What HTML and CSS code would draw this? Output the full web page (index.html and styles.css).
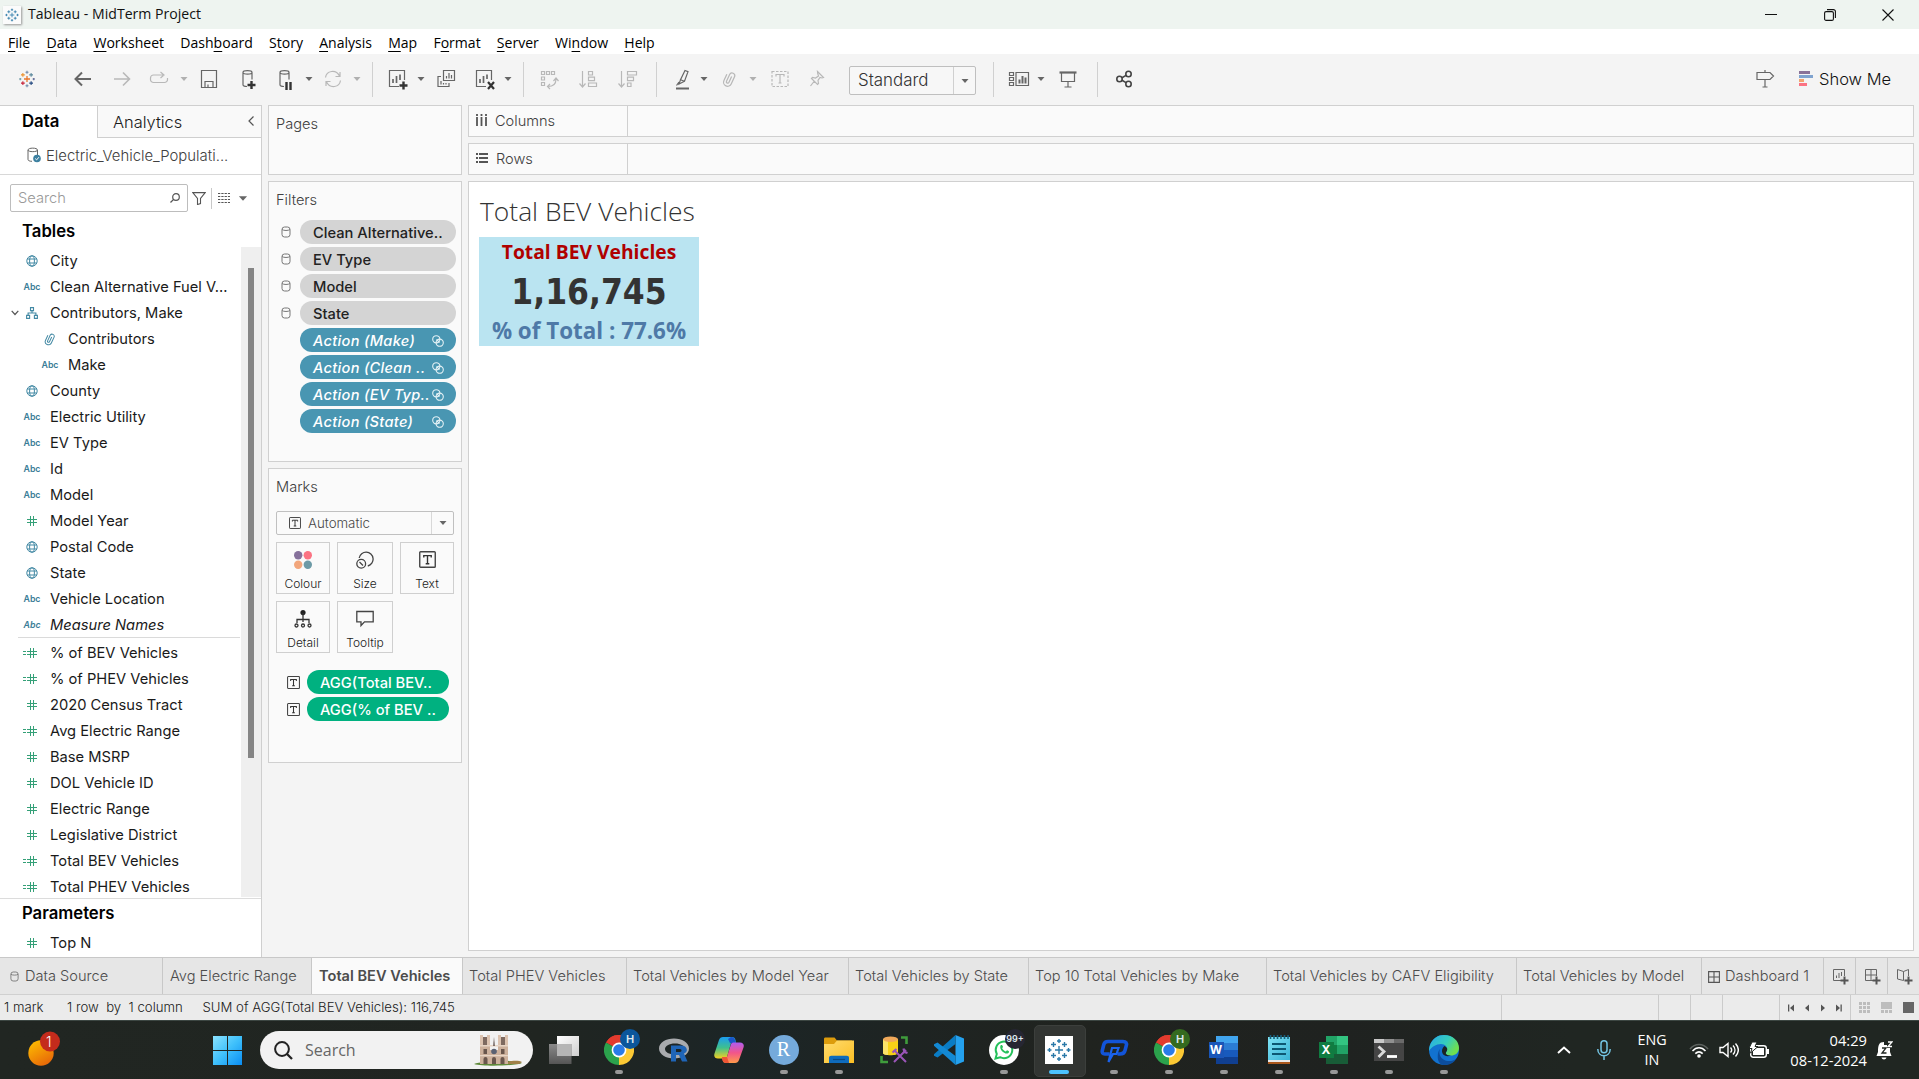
FILE: index.html
```html
<!DOCTYPE html>
<html lang="en">
<head>
<meta charset="utf-8">
<title>Tableau - MidTerm Project</title>
<link rel="stylesheet" href="styles.css">
</head>
<body>
<svg class="defs" width="0" height="0">
  <defs>
    <symbol id="globe" viewBox="0 0 12 12"><g fill="none" stroke="#4389a4" stroke-width="1"><circle cx="6" cy="6" r="5.2"/><ellipse cx="6" cy="6" rx="2.4" ry="5.2"/><path d="M1.2 4h9.6M1.2 8h9.6"/></g></symbol>
    <symbol id="hash" viewBox="0 0 10 10"><path d="M3.5 0v10M6.5 0v10M0 3.5h10M0 6.5h10" stroke="#35a078" stroke-width="1" fill="none"/></symbol>
    <symbol id="calc" viewBox="0 0 14 10"><path d="M7.5 0v10M10.5 0v10M4 3.5h10M4 6.5h10M0 3.5h3M0 6.5h3" stroke="#35a078" stroke-width="1" fill="none"/></symbol>
    <symbol id="tree" viewBox="0 0 12 12"><path d="M4.5 .6h3v3h-3zM.6 8.4h3v3h-3zM8.4 8.4h3v3h-3zM6 3.6V6M2.1 8.4V6h7.8v2.4" fill="none" stroke="#4389a4" stroke-width="1.1"/></symbol>
    <symbol id="clip" viewBox="0 0 12 14"><path transform="rotate(25 6 7)" d="M2.500 4.500v5.500a3.200 3.200 0 0 0 6.400 0V3.300a2.200 2.200 0 0 0-4.300 0v6.400a1 1 0 0 0 2.100 0V4.500" fill="none" stroke="currentColor" stroke-width="1"/></symbol>
    <symbol id="cyl" viewBox="0 0 10 12"><g fill="none" stroke="#777" stroke-width="1"><rect x="1" y="1" width="8" height="10" rx="2.5"/><path d="M1 3.500c1.500 1.300 6.500 1.300 8 0"/></g></symbol>
    <symbol id="rings" viewBox="0 0 12 12"><g fill="none" stroke="#e4f1f5" stroke-width="1.100"><circle cx="4.300" cy="4.300" r="3.600"/><circle cx="7.700" cy="7.700" r="3.600"/><path d="M4.500 4.500l3 3"/></g></symbol>
    <symbol id="tbox" viewBox="0 0 16 16"><rect x=".7" y=".7" width="14.600" height="14.600" rx=".8" fill="none" stroke="#444" stroke-width="1.300"/><path d="M4.500 6V4.300h7V6M8 4.300v7.700M6.300 12h3.400" fill="none" stroke="#333" stroke-width="1.300"/></symbol>
    <symbol id="caret" viewBox="0 0 10 6"><path d="M1.500 1h7L5 5z" fill="currentColor"/></symbol>
    <symbol id="plusgrid" viewBox="0 0 24 24"><g stroke-width="1.400"><path d="M12 1v4M10 3h4M12 19v4M10 21h4" stroke="#6d87a9"/><path d="M12 8v8M8 12h8" stroke="#e8762c" stroke-width="1.700"/><path d="M6.500 4v5M4 6.500h5" stroke="#eb912c"/><path d="M17.500 4v5M15 6.500h5" stroke="#59879b"/><path d="M6.500 15v5M4 17.500h5" stroke="#c72037"/><path d="M17.500 15v5M15 17.500h5" stroke="#1f457e"/><path d="M3 10.500v3M1.500 12h3" stroke="#7099a6"/><path d="M21 10.500v3M19.500 12h3" stroke="#5c6692"/></g></symbol>
    <symbol id="plusblue" viewBox="0 0 24 24"><path d="M12 1v4M10 3h4M12 19v4M10 21h4M12 8v8M8 12h8M6.500 4v5M4 6.500h5M17.500 4v5M15 6.500h5M6.500 15v5M4 17.500h5M17.500 15v5M15 17.500h5M2.500 10v4M.500 12h4M21.500 10v4M19.500 12h4" stroke="#2b79a8" stroke-width="1.400"/></symbol>
    <symbol id="chrome" viewBox="0 0 30 30"><path d="M15 15 2 7.500A15 15 0 0 1 28 7.500z" fill="#e33b2e"/><path d="M15 15 2 7.500A15 15 0 0 0 15 30l6.500-11z" fill="#2ba24c"/><path d="M15 15V7.500h13A15 15 0 0 1 15 30z" fill="#fcc934"/><path d="M2 7.500A15 15 0 0 1 28 7.500H15z" fill="#e33b2e"/><circle cx="15" cy="15" r="7.400" fill="#fff"/><circle cx="15" cy="15" r="5.800" fill="#2a7be8"/></symbol>
    <linearGradient id="win" x1="0" y1="0" x2="1" y2="1"><stop offset="0" stop-color="#8be3ff"/><stop offset=".5" stop-color="#3fc0fb"/><stop offset="1" stop-color="#0a8df2"/></linearGradient>
    <linearGradient id="sun" x1="0" y1="0" x2=".6" y2="1"><stop offset="0" stop-color="#ffc400"/><stop offset="1" stop-color="#e86a08"/></linearGradient>
    <linearGradient id="tv" x1="0" y1="0" x2="1" y2="1"><stop offset="0" stop-color="#fff"/><stop offset="1" stop-color="#cfcfcf"/></linearGradient>
    <linearGradient id="tvb" x1="0" y1="0" x2="0" y2="1"><stop offset="0" stop-color="#8a8a8a"/><stop offset="1" stop-color="#555"/></linearGradient>
    <linearGradient id="cpa" x1="0" y1="0" x2="0" y2="1"><stop offset="0" stop-color="#1b9df0"/><stop offset=".5" stop-color="#3fc08d"/><stop offset="1" stop-color="#f5d020"/></linearGradient>
    <linearGradient id="cpb" x1="0" y1="0" x2="0" y2="1"><stop offset="0" stop-color="#b05cf0"/><stop offset=".5" stop-color="#f2558a"/><stop offset="1" stop-color="#ff9a4a"/></linearGradient>
    <linearGradient id="fold" x1="0" y1="0" x2="1" y2="1"><stop offset="0" stop-color="#ffdb6e"/><stop offset="1" stop-color="#fbbf24"/></linearGradient>
    <linearGradient id="edg" x1="0" y1="0" x2="1" y2=".5"><stop offset="0" stop-color="#2aa9ea"/><stop offset=".6" stop-color="#35cdbd"/><stop offset="1" stop-color="#6fe04f"/></linearGradient>
    <linearGradient id="npad" x1="0" y1="0" x2="1" y2="1"><stop offset="0" stop-color="#7fe3f5"/><stop offset="1" stop-color="#3bb4d6"/></linearGradient>
  </defs>
</svg>

<header class="titlebar">
  <span class="appicon"><svg width="14" height="14"><use href="#plusblue"/></svg></span>
  <span class="apptitle">Tableau - MidTerm Project</span>
  <div class="winbtns">
    <svg width="12" height="12" viewBox="0 0 12 12"><path d="M0 5.500h12" stroke="#111"/></svg>
    <svg width="12" height="12" viewBox="0 0 12 12" fill="none" stroke="#111" stroke-width="1.100"><rect x=".6" y="2.600" width="8.800" height="8.800" rx="1.500"/><path d="M3 .6h6.400a2 2 0 0 1 2 2V9"/></svg>
    <svg width="12" height="12" viewBox="0 0 12 12"><path d="M.5.5l11 11M11.500.5l-11 11" stroke="#111" stroke-width="1.100"/></svg>
  </div>
</header>

<nav class="menubar">
  <span><u>F</u>ile</span><span><u>D</u>ata</span><span><u>W</u>orksheet</span><span>Dash<u>b</u>oard</span><span>S<u>t</u>ory</span><span><u>A</u>nalysis</span><span><u>M</u>ap</span><span>F<u>o</u>rmat</span><span><u>S</u>erver</span><span>Wi<u>n</u>dow</span><span><u>H</u>elp</span>
</nav>

<div class="toolbar">
  <svg class="ic" viewBox="0 0 24 24"><svg x="3" y="3" width="18" height="18"><use href="#plusgrid"/></svg></svg>
  <i class="div m17"></i>
  <svg class="ic m14" viewBox="0 0 24 24"><path d="M20 12H5M11 5.500 4.500 12 11 18.500" stroke-width="2"/></svg>
  <svg class="ic off m15" viewBox="0 0 24 24"><path d="M4 12h15M13 5.500 19.500 12 13 18.500" stroke-width="1.600"/></svg>
  <svg class="ic off m13" viewBox="0 0 24 24"><path d="M16 8H6.500a3 3 0 0 0-3 3v1.500a3 3 0 0 0 3 3h11a3 3 0 0 0 3-3V11M13.500 5l3.500 3-3.500 3"/></svg>
  <svg class="ca off m8"><use href="#caret"/></svg>
  <svg class="ic m8" viewBox="0 0 24 24"><path d="M4.500 3.500h15v17h-15zM8 20v-5.500h8V20M11 17.500V20"/></svg>
  <svg class="ic m15" viewBox="0 0 24 24"><path d="M7 5.500v12.300c0 1 1.500 1.700 4 1.700M7 5.500c0-2.400 9-2.400 9 0v7M7 5.500c0 2.200 9 2.200 9 0"/><path class="dark" d="M15.500 14v8M11.500 18h8" stroke-width="2.400"/></svg>
  <svg class="ic m13" viewBox="0 0 24 24"><path d="M7 5.500v12.300c0 1 1.500 1.700 4 1.700M7 5.500c0-2.400 9-2.400 9 0v7M7 5.500c0 2.200 9 2.200 9 0"/><path class="dark" d="M13.500 15v8M17.500 15v8" stroke-width="2.400"/></svg>
  <svg class="ca m7"><use href="#caret"/></svg>
  <svg class="ic off m7" viewBox="0 0 24 24"><path d="M4.500 10.500C5.500 3.500 15 2 18.500 9M19.500 13.500C18.500 20.500 9 22 5.500 15M19 5v4.500h-4.500M5 19v-4.500h4.500"/></svg>
  <svg class="ca off m7"><use href="#caret"/></svg>
  <i class="div m10"></i>
  <svg class="ic m12" viewBox="0 0 24 24"><path d="M14 19.500H4.500v-16h15V13"/><path d="M8 16v-4M11.500 16V9M15 13V7.500" stroke-width="1.700"/><path class="dark" d="M18.500 14.500v8M14.500 18.500h8" stroke-width="2.400"/></svg>
  <svg class="ca m7"><use href="#caret"/></svg>
  <svg class="ic m8" viewBox="0 0 24 24"><path d="M9.500 3.500h11v10h-11zM7 9.500H4v10h11V16M12.500 11.500V9M15 11.500V6M17.500 11.500V8M7 17.500V14M9.500 17.500V16M12 17.500V16"/></svg>
  <svg class="ic m15" viewBox="0 0 24 24"><path d="M13 19.500H3.500v-16h15V13"/><path d="M7 16v-4M10.500 16V9M14 12V7.500" stroke-width="1.700"/><path class="dark" d="M15 15l6 7M21 15l-6 7" stroke-width="2.200"/></svg>
  <svg class="ca m6"><use href="#caret"/></svg>
  <i class="div m10"></i>
  <svg class="ic off m13" viewBox="0 0 24 24"><path d="M4.500 4.500h3v3h-3zM9.500 4.500h3v3h-3zM14.500 4.500h3v3h-3zM4.500 10h3v3h-3zM4.500 15.500h3v3h-3zM11 19.500c5 0 8-2.500 8-7.500M16.500 14 19 11l2.500 3M13 17l-2.500 2.500L13 22"/></svg>
  <svg class="ic off m16" viewBox="0 0 24 24"><path d="M5.500 4v16M2.500 16.500l3 3.500 3-3.500M11.500 4.500h4v3.500h-4zM11.500 10.200h6v3.500h-6zM11.500 16h8v3.500h-8z"/></svg>
  <svg class="ic off m15" viewBox="0 0 24 24"><path d="M5.500 4v16M2.500 16.500l3 3.500 3-3.500M11.500 4.500h9v3.500h-9zM11.500 10.200h6v3.500h-6zM11.500 16h3.500v3.500h-3.500z"/></svg>
  <i class="div m16"></i>
  <svg class="ic m14" viewBox="0 0 24 24"><path d="M14 3.500l3 1.200-3.500 9.500-4-1.500zM9.500 12.700 8 17l5-2.500M5.500 18.500l2.500-3.500"/><path d="M5 21.500h13" stroke-width="2"/></svg>
  <svg class="ca m4"><use href="#caret"/></svg>
  <svg class="ic off m8" viewBox="0 0 24 24"><use href="#clip" x="5" y="3" width="15" height="18"/></svg>
  <svg class="ca off m7"><use href="#caret"/></svg>
  <svg class="ic off m10" viewBox="0 0 24 24"><path d="M4 4.500h16v15H4z" stroke-dasharray="2.500 1.500"/><path d="M8 9.500V7.500h8v2M12 7.500v8.500M10.500 16h3"/></svg>
  <svg class="ic off m13" viewBox="0 0 24 24"><path d="M12.500 4.500l6 6-1.500.5-2-.5-2 3 .5 3-1 1-6-6 1-1 3 .5 3-2-.8-2.500zM9 14.500 5.500 19"/></svg>
  <div class="combo m20"><span>Standard</span><i><svg class="ca"><use href="#caret"/></svg></i></div>
  <i class="div m17"></i>
  <svg class="ic m13" viewBox="0 0 24 24"><path d="M9 5.500h12.500v13H9zM2.500 5.500h4v3h-4zM2.500 10.500h4v3h-4zM2.500 15.500h4v3h-4z"/><path d="M12.500 16.500v-4M15.500 16.500V9M18.500 16.500v-6" stroke-width="2"/></svg>
  <svg class="ca m5"><use href="#caret"/></svg>
  <svg class="ic m10" viewBox="0 0 24 24"><path d="M5.500 6v8.500h13V6M12 14.500V20M8.500 20h7"/><path d="M3.500 5.500h17" stroke-width="2.200"/></svg>
  <i class="div m17"></i>
  <svg class="ic m14 share" viewBox="0 0 24 24"><circle cx="7.500" cy="12" r="2.700"/><circle cx="16.500" cy="7" r="2.700"/><circle cx="16.500" cy="17" r="2.700"/><path d="M10 10.700l4-2.300M10 13.300l4 2.300"/></svg>
  <svg class="ic guide" viewBox="0 0 24 24"><path d="M4 5.500h13l3.500 3.500L17 12.500H4zM12 3v2.500M12 12.500V20M9.500 20h5"/></svg>
  <svg class="bars" width="14" height="16" viewBox="0 0 14 16"><path d="M0 0h11v3H0z" fill="#8a7298"/><path d="M0 4h14v3H0z" fill="#80a3cf"/><path d="M0 8h5v3H0z" fill="#f2a46f"/><path d="M0 12h8v3H0z" fill="#fb7383"/></svg>
  <span class="showme">Show Me</span>
</div>

<main class="work">
  <aside class="side">
    <div class="sidetabs"><div class="on">Data</div><div class="offtab">Analytics<svg width="6" height="10" viewBox="0 0 6 10"><path d="M5.500.500 1 5l4.500 4.500" fill="none" stroke="#555" stroke-width="1.200"/></svg></div></div>
    <div class="source"><svg width="14" height="16" viewBox="0 0 14 16"><path d="M1 3v9.500c0 1 1.500 1.800 4 1.800M1 3c0-2.500 9.500-2.500 9.500 0v5M1 3c0 2.200 9.500 2.200 9.500 0" fill="none" stroke="#666"/><circle cx="10" cy="11.500" r="3.800" fill="#3c80a0"/><path d="M8.200 11.500l1.400 1.400 2.300-2.700" fill="none" stroke="#fff"/></svg><span>Electric_Vehicle_Populati...</span></div>
    <div class="find">
      <div class="searchbox"><span>Search</span><svg width="10" height="10" viewBox="0 0 10 10"><circle cx="6" cy="4" r="3.300" fill="none" stroke="#555" stroke-width="1.200"/><path d="M3.600 6.400.5 9.500" stroke="#555" stroke-width="1.300"/></svg></div>
      <svg width="14" height="13" viewBox="0 0 14 13"><path d="M.8.600h12.400L8.500 6.500v5l-3 1v-6z" fill="none" stroke="#555" stroke-width="1.100"/></svg>
      <i></i>
      <svg class="listic" width="12" height="10" viewBox="0 0 12 10"><path d="M0 .500h12M0 3.500h12M0 6.500h12M0 9.500h12" stroke="#555" stroke-dasharray="2.300 1"/></svg>
      <svg class="ca"><use href="#caret"/></svg>
    </div>
    <h2>Tables</h2>
    <div class="fields">
      <ul>
        <li><b><svg width="12" height="12"><use href="#globe"/></svg></b>City</li>
        <li><b class="abc">Abc</b>Clean Alternative Fuel V...</li>
        <li><svg class="chev" width="8" height="6" viewBox="0 0 8 6"><path d="M.7.800 4 4.500 7.300.800" fill="none" stroke="#555" stroke-width="1.200"/></svg><b class="pulled"><svg width="12" height="12"><use href="#tree"/></svg></b>Contributors, Make</li>
        <li class="sub"><b class="blue"><svg width="12" height="14"><use href="#clip"/></svg></b>Contributors</li>
        <li class="sub"><b class="abc">Abc</b>Make</li>
        <li><b><svg width="12" height="12"><use href="#globe"/></svg></b>County</li>
        <li><b class="abc">Abc</b>Electric Utility</li>
        <li><b class="abc">Abc</b>EV Type</li>
        <li><b class="abc">Abc</b>Id</li>
        <li><b class="abc">Abc</b>Model</li>
        <li><b><svg width="10" height="10"><use href="#hash"/></svg></b>Model Year</li>
        <li><b><svg width="12" height="12"><use href="#globe"/></svg></b>Postal Code</li>
        <li><b><svg width="12" height="12"><use href="#globe"/></svg></b>State</li>
        <li><b class="abc">Abc</b>Vehicle Location</li>
        <li class="it"><b class="abc">Abc</b>Measure Names</li>
        <li class="rule"></li>
        <li><b class="eq"><svg width="14" height="10"><use href="#calc"/></svg></b>% of BEV Vehicles</li>
        <li><b class="eq"><svg width="14" height="10"><use href="#calc"/></svg></b>% of PHEV Vehicles</li>
        <li><b><svg width="10" height="10"><use href="#hash"/></svg></b>2020 Census Tract</li>
        <li><b class="eq"><svg width="14" height="10"><use href="#calc"/></svg></b>Avg Electric Range</li>
        <li><b><svg width="10" height="10"><use href="#hash"/></svg></b>Base MSRP</li>
        <li><b><svg width="10" height="10"><use href="#hash"/></svg></b>DOL Vehicle ID</li>
        <li><b><svg width="10" height="10"><use href="#hash"/></svg></b>Electric Range</li>
        <li><b><svg width="10" height="10"><use href="#hash"/></svg></b>Legislative District</li>
        <li><b class="eq"><svg width="14" height="10"><use href="#calc"/></svg></b>Total BEV Vehicles</li>
        <li><b class="eq"><svg width="14" height="10"><use href="#calc"/></svg></b>Total PHEV Vehicles</li>
      </ul>
      <div class="scroll"><i></i></div>
    </div>
    <div class="params"><h2>Parameters</h2><ul><li><b><svg width="10" height="10"><use href="#hash"/></svg></b>Top N</li></ul></div>
  </aside>

  <section class="cards">
    <div class="card pages"><h3>Pages</h3></div>
    <div class="card filters"><h3>Filters</h3>
      <div class="pillrow"><svg width="10" height="12"><use href="#cyl"/></svg><span class="pill">Clean Alternative..</span></div>
      <div class="pillrow"><svg width="10" height="12"><use href="#cyl"/></svg><span class="pill">EV Type</span></div>
      <div class="pillrow"><svg width="10" height="12"><use href="#cyl"/></svg><span class="pill">Model</span></div>
      <div class="pillrow"><svg width="10" height="12"><use href="#cyl"/></svg><span class="pill">State</span></div>
      <div class="pillrow"><span class="pill act"><em>Action (Make)</em><svg width="12" height="12"><use href="#rings"/></svg></span></div>
      <div class="pillrow"><span class="pill act"><em>Action (Clean ..</em><svg width="12" height="12"><use href="#rings"/></svg></span></div>
      <div class="pillrow"><span class="pill act"><em>Action (EV Typ..</em><svg width="12" height="12"><use href="#rings"/></svg></span></div>
      <div class="pillrow"><span class="pill act"><em>Action (State)</em><svg width="12" height="12"><use href="#rings"/></svg></span></div>
    </div>
    <div class="card marks"><h3>Marks</h3>
      <div class="marktype"><svg width="12" height="12"><use href="#tbox"/></svg><span>Automatic</span><i><svg class="ca"><use href="#caret"/></svg></i></div>
      <div class="btns">
        <div><svg width="18" height="18" viewBox="0 0 18 18"><circle cx="4.200" cy="4.200" r="4.200" fill="#86719b"/><circle cx="13.800" cy="4.200" r="4.200" fill="#fb7383"/><circle cx="4.200" cy="13.800" r="4.200" fill="#f2a67c"/><circle cx="13.800" cy="13.800" r="4.200" fill="#6c9aa6"/></svg>Colour</div>
        <div><svg width="18" height="18" viewBox="0 0 18 18" fill="none" stroke="#444" stroke-width="1.300"><path d="M3.200 7a7 7 0 1 1 8.600 8"/><circle cx="5.200" cy="12.800" r="4.400"/><path d="M3.500 11l3.500 3.500"/></svg>Size</div>
        <div><svg width="17" height="17"><use href="#tbox"/></svg>Text</div>
        <div><svg width="18" height="18" viewBox="0 0 18 18"><circle cx="9" cy="2.600" r="2.600" fill="#222"/><path d="M9 3v9M3 13V9.500h12V13" fill="none" stroke="#333" stroke-width="1.300"/><g fill="none" stroke="#333" stroke-width="1.300"><circle cx="2.500" cy="15.500" r="1.500"/><circle cx="9" cy="15.500" r="1.500"/><circle cx="15.500" cy="15.500" r="1.500"/></g></svg>Detail</div>
        <div><svg width="18" height="18" viewBox="0 0 18 18"><path d="M.8 1.500h16.400v10.300H8.500L5 15.500v-3.700H.8z" fill="none" stroke="#444" stroke-width="1.300"/></svg>Tooltip</div>
      </div>
      <div class="pillrow agg"><svg width="13" height="13"><use href="#tbox"/></svg><span class="pill green">AGG(Total BEV..</span></div>
      <div class="pillrow agg"><svg width="13" height="13"><use href="#tbox"/></svg><span class="pill green">AGG(% of BEV ..</span></div>
    </div>
  </section>

  <section class="sheet">
    <div class="shelf"><div><svg width="11" height="12" viewBox="0 0 11 12"><path d="M1 0v2M5.500 0v2M10 0v2M1 3v9M5.500 3v9M10 3v9" stroke="#555" stroke-width="1.800"/></svg>Columns</div></div>
    <div class="shelf"><div><svg width="12" height="10" viewBox="0 0 12 10"><path d="M0 1h2M0 5h2M0 9h2M3 1h9M3 5h9M3 9h9" stroke="#555" stroke-width="1.800"/></svg>Rows</div></div>
    <div class="view">
      <h1>Total BEV Vehicles</h1>
      <div class="kpi"><p class="k1">Total BEV Vehicles</p><p class="k2">1,16,745</p><p class="k3">% of Total : 77.6%</p></div>
    </div>
  </section>
</main>

<nav class="tabs">
  <div class="t1"><svg width="9" height="11"><use href="#cyl"/></svg>Data Source</div>
  <div class="t2">Avg Electric Range</div>
  <div class="t3 cur">Total BEV Vehicles</div>
  <div class="t4">Total PHEV Vehicles</div>
  <div class="t5">Total Vehicles by Model Year</div>
  <div class="t6">Total Vehicles by State</div>
  <div class="t7">Top 10 Total Vehicles by Make</div>
  <div class="t8">Total Vehicles by CAFV Eligibility</div>
  <div class="t9">Total Vehicles by Model</div>
  <div class="t10"><svg width="12" height="12" viewBox="0 0 12 12"><path d="M.6.600h10.800v10.800H.600zM6 .600v10.800M.600 6h10.800" fill="none" stroke="#555" stroke-width="1.100"/></svg>Dashboard 1</div>
  <div class="add"><svg width="16" height="16" viewBox="0 0 16 16"><path d="M8 11.500H.500V.500h11V7M3.500 9V6.500M6 9V4M8.500 7V3" fill="none" stroke="#666"/><path d="M11.500 7.500v8M7.500 11.500h8" stroke="#555" stroke-width="2"/></svg></div>
  <div class="add"><svg width="16" height="16" viewBox="0 0 16 16"><path d="M8 11.500H.500V.500h11V7M6 .500v11M.500 6h11" fill="none" stroke="#666"/><path d="M11.500 7.500v8M7.500 11.500h8" stroke="#555" stroke-width="2"/></svg></div>
  <div class="add"><svg width="16" height="16" viewBox="0 0 16 16"><path d="M6.500 2.500v9L.500 10V.500zM6.500 2.500l5-2V7" fill="none" stroke="#666"/><path d="M11.500 7.500v8M7.500 11.500h8" stroke="#555" stroke-width="2"/></svg></div>
</nav>

<div class="status">
  <span class="s1">1 mark</span><span class="s2">1 row&nbsp; by&nbsp; 1 column</span><span class="s3">SUM of AGG(Total BEV Vehicles): 116,745</span>
  <div class="cells"><i class="c1"></i><i class="c2"></i><i class="c2"></i><i class="c3"></i>
    <div class="navs"><svg width="54" height="8" viewBox="0 0 54 8" fill="#555"><path d="M0 .500h1.300v7H0zM6 .500v7L2 4zM21 .500v7L17 4zM33 .500v7L37 4zM48 .500v7L52 4zM52.500.500h1.300v7h-1.300z"/></svg></div>
    <div class="modes">
      <svg width="11" height="11" viewBox="0 0 11 11"><path d="M0 1.500h11M0 5.500h11M0 9.500h11" stroke="#bdbdbd" stroke-width="3" stroke-dasharray="3 1"/></svg>
      <svg width="11" height="11" viewBox="0 0 11 11"><path d="M0 0h11v7H0z" fill="#bdbdbd"/><path d="M0 9.500h11" stroke="#bdbdbd" stroke-width="3" stroke-dasharray="3 1"/></svg>
      <svg width="11" height="11"><path d="M0 0h11v11H0z" fill="#666"/></svg>
    </div>
  </div>
</div>

<footer class="taskbar">
  <div class="weather"><svg width="32" height="36" viewBox="0 0 32 36"><circle cx="13" cy="22" r="12.700" fill="url(#sun)"/><circle cx="22" cy="10.500" r="10" fill="#c42b1c"/></svg><span>1</span></div>
  <svg class="start" width="29" height="29" viewBox="0 0 29 29"><path d="M0 0h14v14H0zM15 0h14v14H15zM0 15h14v14H0zM15 15h14v14H15z" fill="url(#win)"/></svg>
  <div class="tsearch">
    <svg width="19" height="19" viewBox="0 0 19 19"><circle cx="8" cy="8" r="6.900" fill="none" stroke="#222" stroke-width="2"/><path d="M13 13l5 5" stroke="#222" stroke-width="2.300"/></svg><span>Search</span>
    <svg class="church" width="48" height="32" viewBox="0 0 48 32"><path d="M0 30c8-3 34-5 48-1-4 2.500-38 4-48 1z" fill="#5f8a3a"/><path d="M6 30V11h10v5h8v-5h10v19z" fill="#cdb19c"/><path d="M6 1h3v10H6zM13 1h3v10h-3zM24 1h3v10h-3zM31 1h3v10h-3z" fill="#dcc3b0"/><path d="M9 3h4v8H9zM27 3h4v8h-4z" fill="#7e6a60"/><path d="M6 11h28v1.500H6zM6 21h28v1.200H6z" fill="#e8d5c5"/><path d="M20 3l1 9h-2z" fill="#776a66"/><circle cx="20" cy="17.500" r="2.800" fill="#5a6172"/><path d="M9.500 30v-5a2 2 0 0 1 4 0v5zM18 30v-5a2 2 0 0 1 4 0v5zM26.500 30v-5a2 2 0 0 1 4 0v5zM9.500 20v-5h3.500v5zM27 20v-5h3.500v5z" fill="#69564c"/><path d="M34 28c6-2 12-1 14 0l-3 2H34z" fill="#a08048"/></svg>
  </div>
  <div class="apps">
    <div class="app"><svg viewBox="0 0 30 30"><path d="M8 1h22v20H8z" fill="url(#tv)"/><path d="M0 9h22.500v20H0z" fill="url(#tvb)"/><path d="M8 9h14.500v12H8z" fill="#b5b5b5"/></svg></div>
    <div class="app run"><svg viewBox="0 0 30 30"><use href="#chrome"/></svg><em class="bd blue2">H</em></div>
    <div class="app"><svg viewBox="0 0 30 30"><path fill-rule="evenodd" d="M15 3.500c8 0 15 4 15 10s-7 10-15 10-15-4-15-10 7-10 15-10zm1 5C10 8.500 6 11 6 14s4 5.500 10 5.500S26 17 26 14s-4-5.500-10-5.500z" fill="#a9abae"/><path fill-rule="evenodd" d="M12 10.500h10c7 0 7.500 7 3 8l3.500 8H23l-3-6.500h-3v6.500h-5zm5 3.500v3h4c2 0 2-3 0-3z" fill="#1f65b7"/></svg></div>
    <div class="app"><svg viewBox="0 0 30 30"><path d="M9 2h9c2 0 3 1 3.500 3l.5 3h-5l-4 14c-.5 1-1.500 1.500-3 1.500H4c-3 0-4.500-2-3.500-5L5 5c.7-2 2-3 4-3z" fill="url(#cpa)"/><path d="M17 2c2.500 0 3.500 1 4 3l1 3h-6l-2-4z" fill="#1a55c8"/><path d="M21 28h-9c-2 0-3-1-3.500-3L8 22h5l4-13c.5-1 1.500-1.500 3-1.500h6c3 0 4.500 2 3.500 5L25 25c-.7 2-2 3-4 3z" fill="url(#cpb)"/><path d="M8 22h5l2 6h-3c-2 0-3-1-3.500-3z" fill="#ee5535"/></svg></div>
    <div class="app run"><span class="rs">R</span></div>
    <div class="app run"><svg viewBox="0 0 30 30"><path d="M0 4c0-1 .5-1.500 1.500-1.500h9L13 5.500h15V14H0z" fill="#dd9c0c"/><path d="M0 9h10l3-3.500h17V28H0z" fill="url(#fold)"/><path d="M5 28v-5c0-1.500.8-2.300 2.300-2.300h15.400c1.500 0 2.300.8 2.300 2.300v5z" fill="#0f6cbd"/><path d="M9 24.500h12" stroke="#0b4a86" stroke-width="1.200"/></svg></div>
    <div class="app"><svg viewBox="0 0 30 30"><path d="M4 4v14c0 3 15 3 15 0V4z" fill="#f7d117"/><path d="M4 4v14c0 1 2 2 5 2V4z" fill="#fbe36a"/><ellipse cx="11.500" cy="4.200" rx="7.500" ry="2.800" fill="#f0a95a"/><path d="M22 2.500h5.500V9M2.500 21v6H9" fill="none" stroke="#3f9c3c" stroke-width="2.600"/><path d="M15 15l12 12M27 15 15 27" stroke="#9a55b8" stroke-width="2"/><path d="M13.500 17.500l4-3.500M24.500 13.500l1 3.500 3 1" fill="none" stroke="#9a55b8" stroke-width="2.300"/></svg></div>
    <div class="app"><svg viewBox="0 0 30 30"><path d="M21.500 0 30 3.500v23L21.500 30z" fill="#24a1ee"/><path d="M21.500 0v9L3.500 22.500 0 20.800v-1.600z" fill="#0a7cc4"/><path d="M21.500 30v-9L3.500 7.500 0 9.200v1.600z" fill="#1389d4"/></svg></div>
    <div class="app run"><svg viewBox="0 0 30 30"><circle cx="15" cy="15" r="15" fill="#fff"/><path d="M6.500 23.500l1.300-4.500a8.300 8.300 0 1 1 3.300 3.200z" fill="none" stroke="#25c05b" stroke-width="2"/><path d="M11.500 10.500c1-1 2-.5 2.500 1.500l-.8 1.200c1 1.800 2 2.600 3.600 3.300l1.200-1.200c2 .7 2.300 1.200 2 2-2 4-10.500-2-8.500-6.800z" fill="#25c05b"/></svg><em class="bd dark2">99+</em></div>
    <div class="app run active"><svg viewBox="0 0 30 30"><path d="M1 1h28v28H1z" fill="#fff"/><svg x="3" y="3" width="24" height="24"><use href="#plusblue"/></svg></svg></div>
    <div class="app run"><svg viewBox="0 0 30 30"><path d="M10.500 19H6c-2.500 0-3.200-1.500-2.700-3.500l1.500-6C5.300 7.500 6.500 6.500 9 6.500h15c3 0 4 1.500 3.300 4L26 15.500c-.6 2.500-2 3.500-5 3.500h-2.500" fill="none" stroke="#1254d8" stroke-width="3.600"/><path d="M9.500 27l3.500-14h6.500l-2 6H14L10 26z" fill="none" stroke="#1a63ee" stroke-width="2.200"/></svg></div>
    <div class="app run"><svg viewBox="0 0 30 30"><use href="#chrome"/></svg><em class="bd green2">H</em></div>
    <div class="app run"><svg viewBox="0 0 30 30"><path d="M7 1h22v7H7z" fill="#41a5ee"/><path d="M7 8h22v7H7z" fill="#2b7cd3"/><path d="M7 15h22v7H7z" fill="#185abd"/><path d="M7 22h22v7H7z" fill="#103f91"/><path d="M0 7h15v16H0z" fill="#1a56b8"/></svg><em class="ol">W</em></div>
    <div class="app run"><svg viewBox="0 0 30 30"><path d="M4 25h22v4H4z" fill="#a8571c"/><path d="M4 24h22v3H4z" fill="#e9e9e9"/><path d="M4 2h22v23H4z" fill="url(#npad)"/><path d="M8 9h14M8 14h14M8 19h14" stroke="#0d5873" stroke-width="2"/><path d="M6.500 0v4M10 0v4M13.500 0v4M17 0v4M20.500 0v4M24 0v4" stroke="#17607c" stroke-width="1.600"/></svg></div>
    <div class="app run"><svg viewBox="0 0 30 30"><path d="M7 1h11v9H7z" fill="#21a366"/><path d="M18 1h11v9H18z" fill="#33c481"/><path d="M7 10h11v9H7z" fill="#107c41"/><path d="M18 10h11v9H18z" fill="#21a366"/><path d="M7 19h22v10H7z" fill="#185c37"/><path d="M0 7h15v16H0z" fill="#107c41"/></svg><em class="ol">X</em></div>
    <div class="app run"><svg viewBox="0 0 30 30"><path d="M0 4h30v22H0z" fill="#454545"/><path d="M0 4h10v4H0z" fill="#c9c9c9"/><path d="M10 4h10v4H10z" fill="#909090"/><path d="M20 4h10v4H20z" fill="#6a6a6a"/><path d="M4.500 11.500l5.500 5-5.500 5.500" fill="none" stroke="#d9d9d9" stroke-width="2.800"/><path d="M13 21.500h10" stroke="#fff" stroke-width="2.800"/></svg></div>
    <div class="app run"><svg viewBox="0 0 30 30"><circle cx="15" cy="15" r="15" fill="#1272cf"/><path d="M1 10C4 3 9 0 15 0c9 0 15 6 15 13 0 5-4 7.500-8 7.500-5 0-6-2-4.500-4C19.500 12 16 9 12 9 7 9 2.500 12 0 16c0-2 .3-4 1-6z" fill="url(#edg)"/><path d="M11 14c-2 5 1 11 8 12 3 .4 6-.6 8.200-2-3 4.500-8 6.500-13 6C7 29 8 17 11 14z" fill="#0c4d9c"/><path d="M15.500 11c3 1.500 3.500 3.500 2 5.500-1.500 2-.5 4 4.500 4-5 2-9-.5-9-4.500 0-2 1-4 2.500-5z" fill="#1b2422"/></svg></div>
  </div>
  <div class="tray">
    <svg width="14" height="8" viewBox="0 0 14 8"><path d="M1 7l6-5.500L13 7" fill="none" stroke="#fff" stroke-width="1.900"/></svg>
    <svg class="mic" width="14" height="20" viewBox="0 0 14 20"><rect x="4" y=".8" width="6" height="12" rx="3" fill="none" stroke="#74c5e4" stroke-width="1.500"/><path d="M.8 9c0 9 12.400 9 12.400 0M7 15.800V20" fill="none" stroke="#74c5e4" stroke-width="1.500"/></svg>
    <div class="lang">ENG<br>IN</div>
    <svg class="wifi" width="20" height="15" viewBox="0 0 20 15" fill="none" stroke-width="1.600"><path d="M1 6C6 0 14 0 19 6" stroke="#5d625f"/><path d="M3.500 8c4-4.300 9-4.300 13 0M6.300 10.700c2.400-2.300 5-2.300 7.400 0" stroke="#fff"/><circle cx="10" cy="13" r="1.800" fill="#fff"/></svg>
    <svg class="vol" width="20" height="16" viewBox="0 0 20 16" fill="none" stroke="#fff" stroke-width="1.400"><path d="M1 5.500h3L9 1.500v13l-5-4H1zM11.500 5.500c1.400 1.500 1.400 3.500 0 5M14 3.500c2.600 2.700 2.600 6.300 0 9M16.500 1.500c3.500 4 3.500 9 0 13"/></svg>
    <svg class="bat" width="20" height="16" viewBox="0 0 20 16"><rect x="1.700" y="3.700" width="15.600" height="11.600" rx="2.500" fill="none" stroke="#fff" stroke-width="1.400"/><path d="M4 6h11v7H4z" fill="#fff"/><path d="M3 0h5L6 4.500h3L1.500 11 3 6.500H0z" fill="#fff" stroke="#202622" stroke-width="1"/><path d="M18 7h2v5h-2z" fill="#fff"/></svg>
    <div class="clock">04:29<br>08-12-2024</div>
    <svg class="bell" width="17" height="19" viewBox="0 0 17 19"><path d="M2 11c0-7 1-10 6-10v3h3v3h3v4l1.500 4H.5z" fill="#fff"/><path d="M5.500 16.500h5c-.5 2.500-4.500 2.500-5 0z" fill="#fff"/><path d="M6 7h4l-4 5h4.500" fill="none" stroke="#202622" stroke-width="1.300"/><path d="M12 1h4l-4 4.500h4" fill="none" stroke="#fff" stroke-width="1.300"/></svg>
  </div>
</footer>
</body>
</html>
```
FILE: styles.css
```css
* { box-sizing: border-box; }
html, body { margin: 0; height: 100%; overflow: hidden; }
body {
  display: flex; flex-direction: column;
  width: 1919px; height: 1079px;
  font: 350 14.7px/1 Inter, "Liberation Sans", sans-serif;
  color: #1a1a1a; background: #f4f4f4;
}
h1, h2, h3, p, ul { margin: 0; padding: 0; font-weight: 400; }
ul { list-style: none; }
svg { display: block; flex: none; }
.defs { position: absolute; }

/* window chrome */
.titlebar { display: flex; align-items: center; height: 29px; padding: 0 25px 0 3px; background: #eef4f0; font-family: "Open Sans", sans-serif; }
.appicon { display: flex; padding: 2px; background: #fbfbfb; box-shadow: 1px 1px 2px #999; }
.apptitle { margin-left: 7px; font-size: 14.100px; font-weight: 400; color: #111; }
.winbtns { display: flex; gap: 46.500px; margin-left: auto; }
.menubar { display: flex; align-items: center; gap: 16.200px; height: 25px; padding: 2px 0 0 8px; background: #fff; font: 14.050px "Open Sans", sans-serif; color: #000; }
.menubar u { text-underline-offset: 3px; text-decoration-thickness: 1px; }

/* toolbar */
.toolbar { display: flex; align-items: center; height: 51px; padding: 0 29px 1px 15px; color: #5c5c5c; }
.ic { width: 24px; height: 24px; fill: none; stroke: #666; stroke-width: 1.2; }
.ic.off { stroke: #b8b8b8; color: #b8b8b8; }
.ic.share { stroke: #444; stroke-width: 1.6; }
.dark { stroke: #333; }
.ca { width: 10px; height: 6px; color: #666; }
.ca.off { color: #b0b0b0; }
.div { width: 1px; height: 35px; background: #d0d0d0; }
.m4 { margin-left: 4px; } .m5 { margin-left: 5px; } .m6 { margin-left: 6px; } .m7 { margin-left: 7px; } .m8 { margin-left: 8px; }
.m10 { margin-left: 10px; } .m12 { margin-left: 12px; } .m13 { margin-left: 13px; } .m14 { margin-left: 14px; } .m15 { margin-left: 15px; }
.m16 { margin-left: 16px; } .m17 { margin-left: 17px; } .m20 { margin-left: 20px; }
.combo { display: flex; align-items: stretch; width: 127px; height: 29px; margin-top: 3px; border: 1px solid #bfbfbf; border-radius: 2px; background: #f7f7f7; }
.combo span { flex: 1; padding-left: 8px; font-size: 16.900px; font-weight: 300; line-height: 27px; color: #333; }
.combo i { display: grid; place-items: center; width: 22px; border-left: 1px solid #d0d0d0; }
.guide { margin-left: auto; }
.bars { margin-left: 22px; }
.showme { margin-left: 6px; width: 71px; font-size: 16.500px; font-weight: 300; color: #111; white-space: nowrap; }

/* work area */
.work { display: flex; height: 852px; }
.side { display: flex; flex-direction: column; width: 262px; border-top: 1px solid #cfcfcf; border-right: 1px solid #cfcfcf; background: #fff; }
.sidetabs { display: flex; height: 32px; }
.on { width: 97px; padding: 7px 0 0 22px; font-size: 16.800px; font-weight: 600; color: #000; }
.offtab { display: flex; flex: 1; justify-content: space-between; padding: 8px 7px 0 15px; border-left: 1px solid #cfcfcf; border-bottom: 1px solid #cfcfcf; background: #f9f9f9; font-size: 16.400px; }
.offtab svg { margin-top: 2px; }
.source { display: flex; align-items: center; gap: 5px; height: 37px; padding-left: 27px; border-bottom: 1px solid #d8d8d8; font-size: 14.900px; color: #404040; }
.source svg { margin-top: -2px; }
.find { display: flex; align-items: center; height: 46px; padding: 0 10px; }
.searchbox { display: flex; align-items: center; justify-content: space-between; flex: none; width: 178px; height: 28px; padding: 0 7px; border: 1px solid #bdbdbd; border-radius: 2px; color: #999; }
.find > svg { margin-left: 4px; }
.find i { width: 1px; height: 21px; margin-left: 5px; background: #c8c8c8; }
.find .listic { margin-left: 6px; }
.find .ca { width: 12px; height: 7px; margin-left: 7px; }
h2 { padding-left: 22px; font-size: 16.700px; font-weight: 600; color: #000; }
.side > h2 { height: 26px; line-height: 21px; }
.fields { display: flex; height: 650px; overflow: hidden; }
.fields ul { flex: 1; padding-top: 1px; }
li { display: flex; align-items: center; height: 26px; white-space: nowrap; }
li b { display: flex; justify-content: center; flex: none; width: 18px; margin: 0 8px 0 24px; padding-right: 3px; }
li b.pulled { margin-left: 5px; }
li b.abc { padding: 0; margin-left: 23px; margin-right: 9px; font-size: 8.800px; font-weight: 600; color: #3b7d97; }
li b.eq { padding-right: 7px; }
li b.blue { color: #4389a4; }
li.sub { padding-left: 18px; }
li.it { font-style: italic; }
.chev { margin-left: 11px; }
li.rule { height: 1px; margin: -1px 1px 2px 18px; background: #dadada; }
.scroll { width: 20px; padding: 21px 7px 0; background: #efefef; }
.scroll i { display: block; height: 490px; background: #858585; }
.params { margin-top: 1px; flex: 1; border-top: 1px solid #dcdcdc; }
.params h2 { height: 31px; line-height: 28px; }

.cards { display: flex; flex-direction: column; gap: 6px; width: 194px; margin-left: 6px; }
.card { border: 1px solid #d0d0d0; background: #fafafa; padding: 0 5px 0 7px; }
h3 { font-size: 14.600px; font-weight: 350; color: #404040; }
.pages { height: 70px; } .pages h3 { padding-top: 11px; }
.filters { height: 281px; }
.filters h3 { height: 38px; padding-top: 11px; }
.marks { height: 295px; } .marks h3 { height: 42px; padding-top: 11px; }
.pillrow { display: flex; align-items: center; justify-content: flex-end; height: 24px; margin-bottom: 3px; }
.pillrow > svg { margin-right: 9px; }
.pill { display: flex; align-items: center; width: 156px; height: 24px; padding: 2px 0 0 13px; border-radius: 12px; background: #d4d4d4; font-size: 14.700px; font-weight: 480; color: #222; white-space: nowrap; }
.act { justify-content: space-between; padding-right: 12px; background: #4996b2; font-size: 14.600px; letter-spacing: .3px; color: #fff; }
.green { width: 142px; background: #00b180; color: #fff; }
.agg { padding-right: 7px; }
.agg > svg { margin-right: 7px; }
.marktype { display: flex; align-items: center; width: 178px; height: 24px; border: 1px solid #c0c0c0; border-radius: 2px; padding-left: 12px; color: #484848; font-size: 13.300px; }
.marktype span { flex: 1; margin-left: 7px; padding-top: 1px; }
.marktype i { display: grid; place-items: center; width: 22px; height: 100%; border-left: 1px solid #d8d8d8; }
.btns { display: grid; grid-template-columns: 54px 56px 54px; grid-auto-rows: 52px; gap: 7px; margin: 7px 0 17px; }
.btns div { display: flex; flex-direction: column; align-items: center; justify-content: space-between; padding: 8px 0 3px; border: 1px solid #cfcfcf; font-size: 12px; }

.sheet { display: flex; flex-direction: column; gap: 6px; flex: 1; margin: 0 5px 0 6px; }
.shelf { height: 32px; border: 1px solid #d0d0d0; background: #fafafa; }
.shelf div { display: flex; align-items: center; gap: 8px; width: 159px; height: 100%; padding: 1px 0 0 7px; border-right: 1px solid #d0d0d0; font-size: 14.600px; color: #404040; }
.shelf svg { margin-top: -3px; }
.view { height: 770px; padding: 9px 0 0 10px; border: 1px solid #d0d0d0; background: #fff; }
h1 { height: 46px; padding-left: 1px; font: 300 26.400px/40px "Open Sans", sans-serif; color: #333; }
.kpi { width: 220px; height: 109px; background: #bae4f1; text-align: center; font-family: "Open Sans", sans-serif; font-weight: 700; white-space: nowrap; }
.k1 { font-size: 19.300px; line-height: 30px; font-weight: 700; color: #b00000; }
.k2 { font: 700 35px/50px "DejaVu Sans Condensed", "DejaVu Sans", sans-serif; color: #333; }
.k3 { font-size: 22.400px; line-height: 28px; font-weight: 700; color: #4e79a7; }

/* sheet tabs and status bar */
.tabs { display: flex; height: 38px; border-top: 1px solid #c8c8c8; border-bottom: 1px solid #d0d0d0; background: #e6e6e6; color: #4c4c4c; }
.tabs div { display: flex; align-items: center; flex: none; padding: 1px 0 0 6px; border-right: 1px solid #c8c8c8; white-space: nowrap; font-size: 14.600px; }
.t1 { width: 163px; gap: 6px; } .tabs .t1 { padding-left: 10px; }
.t2 { width: 149px; } .t3 { width: 151px; } .t4 { width: 164px; } .t5 { width: 222px; } .t6 { width: 180px; }
.t7 { width: 238px; } .t8 { width: 250px; } .t9 { width: 185px; } .t10 { width: 122px; gap: 5px; }
.tabs .t2, .tabs .t3 { padding-left: 7px; }
.tabs .cur { background: #fafafa; font-weight: 600; padding-top: 0; }
.tabs .add { width: 32px; padding-left: 9px; }
.status { display: flex; align-items: center; height: 25px; padding-left: 4px; background: #ebebeb; font-size: 13.200px; color: #1a1a1a; white-space: nowrap; }
.s1 { width: 63px; } .s2 { width: 135.500px; }
.cells { display: flex; align-items: stretch; height: 25px; margin-left: auto; }
.cells > * { border-left: 1px solid #cbcbcb; }
.c1 { width: 157px; } .c2 { width: 32px; } .c3 { width: 57px; }
.navs { display: flex; align-items: center; width: 71px; padding-left: 8px; }
.modes { display: flex; align-items: center; gap: 11px; width: 69px; padding-left: 8px; }

/* desktop taskbar */
.taskbar { display: flex; align-items: center; height: 59px; border-top: 1px solid #3c4642; background: linear-gradient(90deg, #212622 0%, #202521 28%, #1c2526 38%, #20231f 56%, #1f2220 70%, #202622 82%); }
.weather { position: relative; width: 185px; padding: 0 0 3px 28px; }
.weather span { position: absolute; left: 46px; top: 4px; font-size: 14px; color: #fff; }
.start { margin-left: 28px; }
.tsearch { display: flex; align-items: center; width: 273px; height: 38px; margin-left: 18px; padding-left: 14px; border-radius: 19px; background: #f2f2f2; }
.tsearch span { margin-left: 12px; font: 16px "Open Sans", sans-serif; color: #666; }
.church { margin-left: auto; margin-right: 11px; }
.apps { display: flex; margin-left: 3px; }
.app { position: relative; display: flex; justify-content: center; align-items: center; width: 55px; height: 58px; }
.app > svg { width: 30px; height: 30px; }
.run::after { content: ""; position: absolute; left: 23.500px; bottom: 5px; width: 8px; height: 4px; border-radius: 2px; background: #989898; }
.active::before { content: ""; position: absolute; z-index: 0; left: 2.500px; top: 4px; width: 50px; height: 50px; border-radius: 5px; background: #323532; border: 1px solid #3c3f3c; }
.active > svg { position: relative; }
.active::after { left: 20.500px; width: 14px; left: 17.500px; width: 20px; background: #4cc2ff; }
.bd { position: absolute; right: 6px; top: 8px; width: 20px; height: 20px; border-radius: 50%; font: 600 11px/20px Inter, sans-serif; text-align: center; color: #dfe9ef; }
.blue2 { background: #0b569b; } .green2 { background: #356a1f; } .dark2 { background: #262632; font-size: 9px; }
.ol { position: absolute; left: 12.500px; top: 21px; width: 15px; font: 700 12px/16px Inter, sans-serif; text-align: center; color: #fff; }
.rs { width: 30px; height: 30px; border-radius: 50%; background: #75aadb; font: 20px/29px "Liberation Serif", serif; text-align: center; color: #fff; }
.tray { display: flex; align-items: center; margin-left: auto; margin-right: 26px; font: 14.300px/20px "Open Sans", sans-serif; color: #fff; }
.mic { margin-left: 26px; }
.lang { width: 60px; margin-left: 11px; text-align: center; }
.wifi { margin-left: 7px; } .vol { margin-left: 10px; } .bat { margin-left: 10px; }
.clock { width: 98px; text-align: right; font-size: 14.700px; }
.bell { margin-left: 9px; }
```
